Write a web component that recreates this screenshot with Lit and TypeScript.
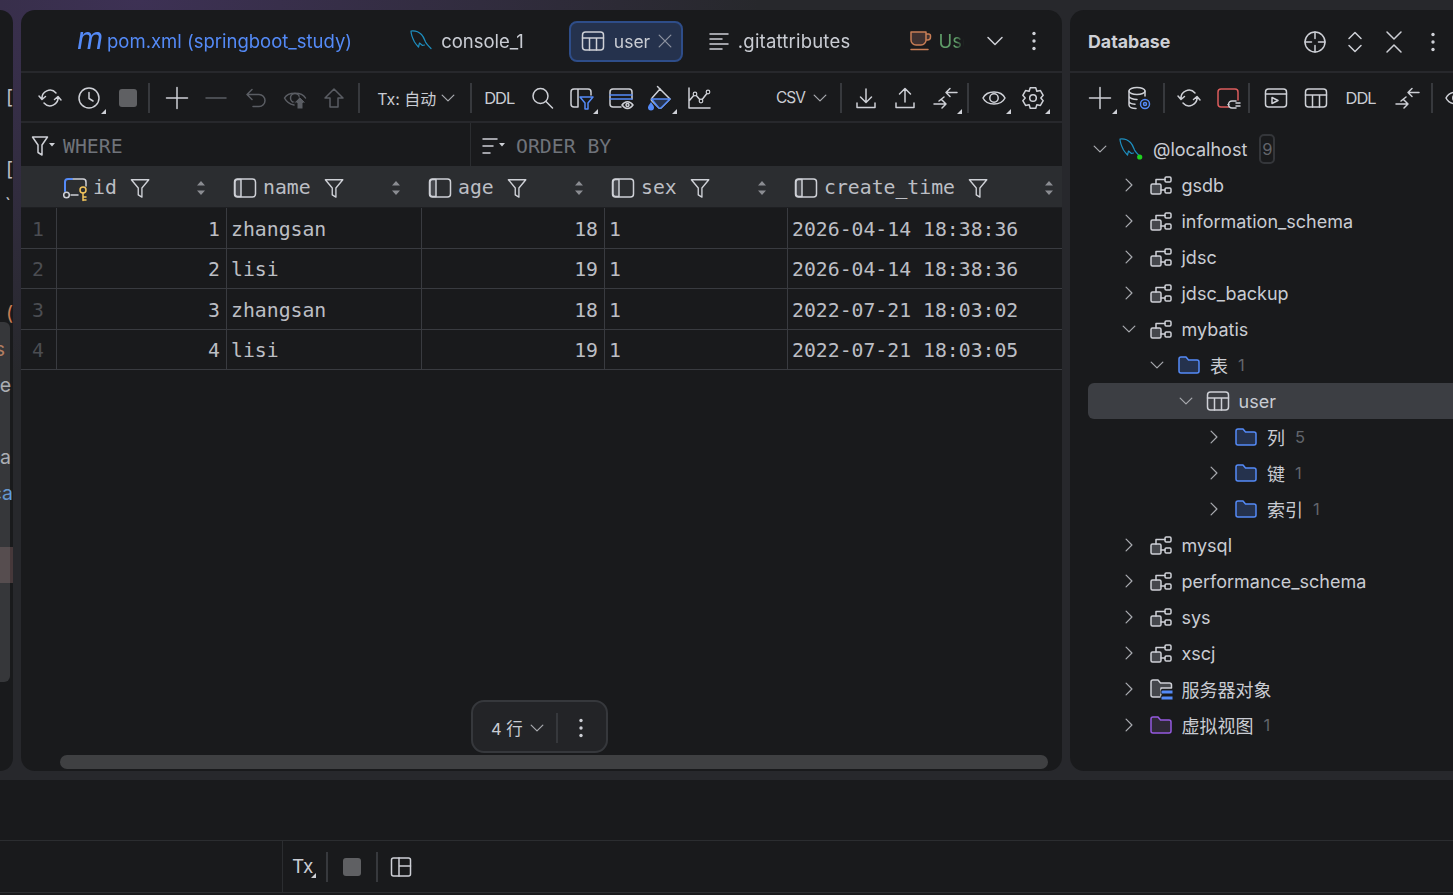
import { LitElement, html, css, svg } from 'lit';
import { customElement } from 'lit/decorators.js';

const tri = svg`<path class="tri" d="M29 23v5h-5z"/>`;
const compareArrows = svg`<path d="M24 6.500H13M17 2.500l-4 4 4 4M11 11L6 15M1 18h12M9 14l4 4-4 4"/>`;
const dolphinBody = svg`<path class="sea" d="M0 2c4-.5 8 1 10.500 3.500 2 2 3 5 4 7.500 1 2 3 4 5.500 6.500M0 2c0 4 2 8 3.500 11 1 1.500 2 3 4 5l1-4 3 2.500 2-.5"/>`;

const icons: Record<string, unknown> = {
  refresh: svg`<path d="M4 13A8 8 0 0 1 18 7M1 10l3 3.500L7.500 10.500M20 11A8 8 0 0 1 6 17M16.500 13.500l3.500-3 3 3.500"/>`,
  history: svg`<circle cx="12" cy="12" r="10"/><path d="M12 6.500V12.500L16 15"/>${tri}`,
  stop: svg`<rect class="stopfill" x="3" y="3" width="18" height="18" rx="3"/>`,
  plus: svg`<path d="M12 1.500v21M1.500 12h21"/>`,
  plusdrop: svg`<path d="M12 1.500v21M1.500 12h21"/>${tri}`,
  minus: svg`<path class="off" d="M2 12h20"/>`,
  undo: svg`<path class="off" d="M8 3.500L3 8.500l5 5M3 8.500h12a6 6 0 0 1 0 12H9"/>`,
  eyeup: svg`<path class="off" d="M11 19C6 18 3 15 1.500 12 5 5.500 19 5.500 22.500 12"/><circle class="off" cx="12" cy="12" r="4.500"/><path class="offfill" d="M17 11l6 6h-3v6h-6v-6h-3z"/>`,
  up: svg`<path class="off" d="M12 3l9 9h-5v9H8v-9H3z"/>`,
  chevron: svg`<path d="M5 8.500l7 7 7-7"/>`,
  search: svg`<circle cx="10.500" cy="10" r="7.500"/><path d="M16 15.500l6.500 6.500"/>`,
  filtertable: svg`<path d="M9 21H5a3 3 0 0 1-3-3V6a3 3 0 0 1 3-3h14a3 3 0 0 1 3 3v3M9 3v18"/><path class="blue" d="M11 11h13l-5 6v6h-3v-6z"/>${tri}`,
  cardeye: svg`<path d="M12 21H4a3 3 0 0 1-3-3V6a3 3 0 0 1 3-3h16a3 3 0 0 1 3 3v7"/><path class="blue" d="M1 9h22M1 13h22"/><path d="M13 19c3-4.500 8-4.500 11 0-3 4.500-8 4.500-11 0z"/><circle cx="18.500" cy="19" r="1.500"/>`,
  paint: svg`<path d="M12 3l10 10-8.500 8.500a2 2 0 0 1-3 0L4 15a2 2 0 0 1 0-3z"/><path class="bluefill" d="M3.500 13h18.500l-8.500 8.500a2 2 0 0 1-3 0z"/><path d="M12 3L9.500 .5"/><path class="dropfill" d="M3 16c-2 3-3 4-3 5.500a3 3 0 0 0 6 0c0-1.500-1-2.500-3-5.500z"/>${tri}`,
  chart: svg`<path d="M2 2v20h21M2 15l6-7 6 7 7-9"/><circle class="bg" cx="8" cy="8" r="1.800"/><circle class="bg" cx="14" cy="15" r="1.800"/><circle class="bg" cx="21" cy="6" r="1.800"/>`,
  download: svg`<path d="M12 3v13M6.500 11l5.500 5.500 5.500-5.500M3 17v4.500h18V17"/>`,
  upload: svg`<path d="M12 16V3M6.500 8L12 2.500 17.500 8M3 17v4.500h18V17"/>`,
  compare: svg`${compareArrows}${tri}`,
  compareplain: compareArrows,
  eye: svg`<path d="M1 12c4-8 18-8 22 0-4 8-18 8-22 0z"/><circle cx="12" cy="12" r="4.200"/>${tri}`,
  gear: svg`<path stroke-width="1.250" transform="translate(-2.400 -1.200) scale(1.200)" d="M9.700 2.500h4.600l.9 2.900 3-.6 2.300 4-2 2.200 2 2.200-2.300 4-3-.6-.9 2.900H9.700l-.9-2.900-3 .6-2.300-4 2-2.200-2-2.200 2.300-4 3 .6z"/><circle cx="12" cy="12" r="3.300"/>${tri}`,
  target: svg`<circle cx="12" cy="12" r="10"/><path d="M12 2v6.500M12 15.500V22M2 12h6.500M15.500 12H22"/>`,
  expand: svg`<path d="M6 8.500l6-6 6 6M6 15.500l6 6 6-6"/>`,
  collapse: svg`<path d="M5 2l7 7 7-7M5 22l7-7 7 7"/>`,
  dots: svg`<circle class="dot" cx="12" cy="4.500" r="1.700"/><circle class="dot" cx="12" cy="12" r="1.700"/><circle class="dot" cx="12" cy="19.500" r="1.700"/>`,
  dbgear: svg`<ellipse cx="10" cy="5" rx="8" ry="3.500"/><path d="M2 5v14c0 2 3 3.500 7 3.500M18 5v5M2 10c0 2 4 3.500 8 3.500M2 15c0 2 3 3 6 3.300"/><circle class="bluestroke" cx="18" cy="18" r="4.500"/><circle class="bluestroke" cx="18" cy="18" r="1.500"/>`,
  redplug: svg`<path class="red" d="M13 21H5a3 3 0 0 1-3-3V6a3 3 0 0 1 3-3h14a3 3 0 0 1 3 3v8"/><path d="M20 15h-4a3.500 3.500 0 0 0 0 7h4M20 17h4M20 20h4M12 18.500h1"/>`,
  console: svg`<rect x="1.500" y="3" width="21" height="18" rx="3"/><path d="M1.500 8h21M8 11.500l6 3-6 3z"/>`,
  table: svg`<rect x="1.500" y="3" width="21" height="18" rx="3"/><path d="M1.500 9h21M8.500 9v12M15.500 9v12"/>`,
  dolphin: dolphinBody,
  dolphinlive: svg`${dolphinBody}<circle class="live" cx="19.700" cy="20" r="2.600"/>`,
  schema: svg`<rect class="schemafill" x="2" y="11" width="10" height="10" rx="1.500"/><rect x="16" y="4" width="6" height="5" rx="1.200"/><rect x="16" y="15" width="6" height="5" rx="1.200"/><path d="M12 17h4M7 11V6.500h9"/>`,
  folder: svg`<path class="bluefolder" d="M2 6a2 2 0 0 1 2-2h5l2.500 3h8.500a2 2 0 0 1 2 2v9a2 2 0 0 1-2 2H4a2 2 0 0 1-2-2z"/>`,
  purplefolder: svg`<path class="purplefolder" d="M2 6a2 2 0 0 1 2-2h5l2.500 3h8.500a2 2 0 0 1 2 2v9a2 2 0 0 1-2 2H4a2 2 0 0 1-2-2z"/>`,
  serverfolder: svg`<path class="schemafill" d="M2 5a2 2 0 0 1 2-2h5l2.500 3h9a2 2 0 0 1 2 2v3H12v9H4a2 2 0 0 1-2-2z"/><rect class="serverbar" x="12" y="13" width="12" height="4" rx=".8"/><rect class="serverbar" x="12" y="19" width="12" height="4" rx=".8"/>`,
  column: svg`<rect x="1.500" y="3" width="21" height="18" rx="3"/><path class="schemafill" d="M4.500 3.500h3.500v17H4.500a2.500 2.500 0 0 1-2.500-2.500V6a2.500 2.500 0 0 1 2.500-2.500z"/>`,
  pk: svg`<path d="M9 3h11a3 3 0 0 1 3 3v4M8 19h7"/><path class="bluebold" d="M9 3H5a3 3 0 0 0-3 3v9"/><circle cx="3.500" cy="19" r="2.800"/><circle class="key" cx="20" cy="14" r="3"/><path class="key" d="M20 17v7.500M20 21h3M20 24h3"/>`,
  lines: svg`<path d="M2 5h18M2 10h12M2 15h18M2 20h12"/>`,
  cup: svg`<path class="cup" d="M2 3h15v8a5 5 0 0 1-5 5H7a5 5 0 0 1-5-5zM17 5h2.500a2 2 0 0 1 2 2v1a3 3 0 0 1-3 3H17M2 20.500h17"/>`,
  funnel: svg`<path d="M1.500 3h19l-7.500 9v10l-4-2.500V12z"/>`,
  wherefunnel: svg`<path d="M1.500 3h15l-5.500 8v10l-4-2.500V11z"/><path class="caret" d="M18 9h6l-3 3.500z"/>`,
  orderlines: svg`<path d="M1 5h14M1 12h10M1 19h7"/><path class="caret" d="M17 9h6l-3 3.500z"/>`,
  sort: svg`<path class="sortfill" d="M12 5l4 4.500H8zM12 19l4-4.500H8z"/>`,
  close: svg`<path d="M5 5l14 14M19 5L5 19"/>`,
  layout: svg`<rect x="2.500" y="3" width="19" height="18" rx="2"/><path d="M10 3v18M10 11h11.500"/>`,
  txtri: tri,
};

function icon(name: string, cls = '') {
  return html`<svg class="ic ${cls}" viewBox="0 0 24 24">${icons[name]}</svg>`;
}

const iconCss = css`
  .ic {
    width: 24px;
    height: 24px;
    flex: none;
    overflow: visible;
    fill: none;
    stroke: #ced0d6;
    stroke-width: 1.5;
    stroke-linejoin: round;
    stroke-linecap: round;
  }
  .ic .tri { fill: #ced0d6; stroke: none; }
  .ic .off { stroke: #5a5d63; }
  .ic .offfill { fill: #5a5d63; stroke: #191a1c; stroke-width: 1; }
  .ic .stopfill { fill: #5f6063; stroke: none; }
  .ic .blue { stroke: #548af7; }
  .ic .bluefill { fill: #25324d; stroke: #548af7; }
  .ic .dropfill { fill: #548af7; stroke: none; }
  .ic .bluestroke { stroke: #548af7; fill: #191a1c; }
  .ic .bluebold { stroke: #548af7; stroke-width: 2; }
  .ic .bg { fill: #191a1c; stroke-width: 1.2; }
  .ic .red { stroke: #db5c5c; }
  .ic .sea { stroke: #1e8fc0; stroke-width: 1.2; }
  .ic .live { fill: #1fd11f; stroke: none; }
  .ic .schemafill { fill: #45474c; }
  .ic .bluefolder { stroke: #548af7; fill: #25324d; }
  .ic .purplefolder { stroke: #955ae0; fill: #2f2936; }
  .ic .serverbar { fill: #548af7; stroke: #191a1c; stroke-width: 1; }
  .ic .key { stroke: #f2c55c; }
  .ic .cup { stroke: #c77d55; fill: #3f3130; }
  .ic .caret { fill: #ced0d6; stroke: none; }
  .ic .sortfill { fill: #8a8c91; stroke: none; }
  .ic .dot { fill: #ced0d6; stroke: none; }
`;

interface TreeRow {
  level: number;
  open?: boolean;
  icon: string;
  label: string;
  count?: string;
  selected?: boolean;
}

const tree: TreeRow[] = [
  { level: 1, icon: 'schema', label: 'gsdb' },
  { level: 1, icon: 'schema', label: 'information_schema' },
  { level: 1, icon: 'schema', label: 'jdsc' },
  { level: 1, icon: 'schema', label: 'jdsc_backup' },
  { level: 1, open: true, icon: 'schema', label: 'mybatis' },
  { level: 2, open: true, icon: 'folder', label: '表', count: '1' },
  { level: 3, open: true, icon: 'table', label: 'user', selected: true },
  { level: 4, icon: 'folder', label: '列', count: '5' },
  { level: 4, icon: 'folder', label: '键', count: '1' },
  { level: 4, icon: 'folder', label: '索引', count: '1' },
  { level: 1, icon: 'schema', label: 'mysql' },
  { level: 1, icon: 'schema', label: 'performance_schema' },
  { level: 1, icon: 'schema', label: 'sys' },
  { level: 1, icon: 'schema', label: 'xscj' },
  { level: 1, icon: 'serverfolder', label: '服务器对象' },
  { level: 1, icon: 'purplefolder', label: '虚拟视图', count: '1' },
];

const rows = [
  ['1', 'zhangsan', '18', '1', '2026-04-14 18:38:36'],
  ['2', 'lisi', '19', '1', '2026-04-14 18:38:36'],
  ['3', 'zhangsan', '18', '1', '2022-07-21 18:03:02'],
  ['4', 'lisi', '19', '1', '2022-07-21 18:03:05'],
];

const columns = [
  { name: 'id', icon: 'pk' },
  { name: 'name', icon: 'column' },
  { name: 'age', icon: 'column' },
  { name: 'sex', icon: 'column' },
  { name: 'create_time', icon: 'column' },
];

const leftRows: Array<{ t: string; c?: string; pr?: number; hl?: boolean }> = [
  { t: '[' }, { t: '' }, { t: '[' }, { t: '`', pr: 2 }, { t: '' }, { t: '' },
  { t: '(', c: '#c77d55', pr: 0 }, { t: 's', c: '#c77d55', pr: 8 }, { t: 'e', pr: 2 },
  { t: '' }, { t: 'a', pr: 2 }, { t: 'ca', c: '#5c9ee8', pr: 0 }, { t: '' }, { t: '', hl: true },
];

@customElement('app-root')
export class AppRoot extends LitElement {
  static styles = [
    iconCss,
    css`
      :host {
        display: block;
        font-family: Inter, 'Noto Sans CJK SC', sans-serif;
        color: #c9ccd3;
      }

      .app {
        height: 895px;
        overflow: hidden;
        display: flex;
        flex-direction: column;
        background: radial-gradient(ellipse 620px 380px at 140px 0, #3d3154 0%, rgba(61, 49, 84, 0) 100%), #27282c;
      }

      .panels {
        display: grid;
        grid-template-columns: 13px 1041px 383px;
        column-gap: 8px;
        height: 761px;
        margin-top: 10px;
      }

      .panel {
        background: #191a1c;
        position: relative;
        overflow: hidden;
      }

      .left {
        border-radius: 0 14px 14px 0;
        padding-top: 69px;
      }

      .left-row {
        height: 36px;
        display: flex;
        justify-content: flex-end;
        align-items: center;
        font-size: 19.5px;
        white-space: nowrap;
      }

      .left-row.hl {
        background: #46383a;
      }

      .thumb {
        position: absolute;
        left: 0;
        top: 312px;
        width: 10px;
        height: 360px;
        background: rgba(130, 132, 138, 0.28);
        border-radius: 0 6px 6px 0;
      }

      .main {
        border-radius: 14px;
      }

      .right {
        border-radius: 14px 0 0 14px;
      }

      .tabs {
        height: 60px;
        padding-top: 1px;
        border-bottom: 2px solid #27282c;
        display: flex;
        align-items: center;
      }

      .tab-list {
        flex: 1;
        min-width: 0;
        margin-right: 11px;
        padding-left: 44px;
        display: flex;
        align-items: center;
        overflow: hidden;
        -webkit-mask-image: linear-gradient(to left, transparent, #000 8px);
        mask-image: linear-gradient(to left, transparent, #000 8px);
      }

      .tab {
        flex: none;
        display: flex;
        align-items: center;
        height: 41px;
        padding: 0 46px 0 12px;
        gap: 6px;
        font-size: 18.5px;
        white-space: nowrap;
      }

      .tab.blue {
        color: #548af7;
        gap: 9px;
        padding-right: 47px;
      }

      .tab.console {
        padding-right: 45px;
      }

      .tab.git {
        letter-spacing: 0.2px;
        padding-right: 47px;
      }

      .tab.green {
        color: #5f9c68;
        padding-right: 0;
        gap: 5px;
      }

      .tab.active {
        padding: 0 10px;
        gap: 9px;
        font-size: 17.5px;
        background: #25324d;
        border: 2px solid #2e4d89;
        border-radius: 8px;
        margin-right: 13px;
        box-sizing: border-box;
        width: 114px;
      }

      .tab.active .ic.x {
        width: 20px;
        height: 20px;
        margin-left: -4px;
        stroke: #8d93a0;
      }

      .maven {
        font-style: italic;
        font-size: 30px;
        line-height: 24px;
        width: 21px;
        margin-top: -6px;
      }

      .slot {
        width: 39.33px;
        height: 39px;
        flex: none;
        display: flex;
        align-items: center;
        justify-content: center;
      }

      .toolbar {
        height: 47px;
        padding: 1px 0 0 9px;
        border-bottom: 2px solid #27282c;
        display: flex;
        align-items: center;
      }

      .sep {
        width: 2px;
        height: 30px;
        background: #37393d;
        flex: none;
      }

      .sep.a { margin: 0 7.5px 0 0; }
      .sep.b { margin: 0 0 0 4px; }
      .sep.c { margin: 0; }
      .sep.d { margin: 0 5px 0 3px; }

      .drop {
        display: flex;
        align-items: center;
        font-size: 16px;
        white-space: nowrap;
      }

      .drop .ic {
        width: 20px;
        height: 20px;
        stroke: #a6a8ad;
        margin-left: 2px;
      }

      .tx {
        padding-left: 17px;
        width: 110px;
        box-sizing: border-box;
      }

      .ddl {
        font-size: 16.5px;
        letter-spacing: -1px;
        margin: 0 8px 0 12px;
        white-space: nowrap;
      }

      .csv {
        margin-left: 57px;
        width: 64.5px;
        font-size: 15.5px;
        letter-spacing: -1px;
      }

      .csv .ic {
        margin-left: 5px;
      }

      .filters {
        height: 40px;
        padding-top: 3px;
        display: flex;
        font-family: 'DejaVu Sans Mono', monospace;
        font-size: 19.8px;
        color: #6f737a;
      }

      .filter {
        display: flex;
        align-items: center;
      }

      .filter.where {
        width: 439px;
        padding-left: 10px;
        gap: 8px;
        margin-top: -3px;
        padding-top: 3px;
        border-right: 1px solid #2b2d30;
      }

      .filter.order {
        padding-left: 11px;
        gap: 10px;
      }

      .grid {
        display: grid;
        grid-template-columns: 36px 170px 195px 183px 183px 1fr;
        font-family: 'DejaVu Sans Mono', monospace;
        font-size: 19.8px;
      }

      .head {
        height: 39px;
        padding: 2px 22px 0 6px;
        background: #2b2d30;
        display: flex;
        align-items: center;
        color: #bcbec4;
        border-bottom: 1px solid #1e1f22;
      }

      .head.corner {
        padding: 2px 0 0;
      }

      .head.last {
        padding-right: 9px;
      }

      .head .name {
        margin: 0 13px 0 6px;
      }

      .head .fn {
        width: 22px;
        height: 22px;
      }

      .head .sort {
        margin-left: auto;
        margin-right: -8px;
      }

      .cell {
        height: 40.5px;
        box-sizing: border-box;
        border-bottom: 1px solid #393b40;
        border-right: 1px solid #393b40;
        display: flex;
        align-items: center;
        padding: 3px 6px 0 4px;
        white-space: nowrap;
        color: #bcbec4;
      }

      .cell.num {
        justify-content: flex-end;
      }

      .cell.idx {
        color: #4b4d52;
        padding-left: 11px;
      }

      .cell.end {
        border-right: none;
      }

      .pill {
        position: absolute;
        left: 450px;
        top: 690px;
        width: 137px;
        height: 53px;
        box-sizing: border-box;
        background: #232427;
        border: 2px solid #36383c;
        border-radius: 13px;
        display: flex;
        align-items: center;
        font-size: 16.5px;
        padding: 2px 0 0 18px;
        z-index: 2;
      }

      .pill .ic.chev {
        width: 20px;
        height: 20px;
        margin: 0 9px 0 4px;
        stroke: #a6a8ad;
      }

      .pill .line {
        width: 2px;
        height: 30px;
        background: #36383c;
      }

      .pill .ic.more {
        margin-left: 11px;
      }

      .hbar {
        position: absolute;
        left: 39px;
        width: 988px;
        height: 14px;
        bottom: 2px;
        border-radius: 7px;
        background: #3f4042;
      }

      .rhead {
        height: 59px;
        padding: 2px 0 0 18px;
        display: flex;
        align-items: center;
        border-bottom: 2px solid #27282c;
      }

      .rhead .title {
        font-weight: 700;
        font-size: 17.8px;
        flex: 1;
        color: #ced0d6;
      }

      .rtools {
        height: 50px;
        display: flex;
        align-items: center;
        padding-left: 10.5px;
        overflow: hidden;
      }

      .rtools .sep.e { margin: 0 4px; }
      .rtools .sep.f { margin: 0 7px 0 0; }
      .rtools .ddl { margin: 0 12px 0 10px; }

      .tree {
        margin-top: 8px;
        display: flex;
        flex-direction: column;
        padding-left: 18px;
      }

      .row {
        height: 36px;
        display: flex;
        align-items: center;
        font-size: 18px;
        white-space: nowrap;
        box-sizing: border-box;
      }

      .row.sel {
        background: #3c3e43;
        border-radius: 6px 0 0 6px;
      }

      .row .ic.ch {
        width: 20px;
        height: 20px;
        stroke: #a6a8ad;
        margin-right: 10px;
      }

      .row .ic.ch.closed {
        transform: rotate(-90deg);
      }

      .row .label {
        margin-left: 9px;
      }

      .row .count {
        margin-left: 10px;
        font-size: 16.5px;
        color: #62656b;
      }

      .badge {
        margin-left: 12px;
        width: 16px;
        height: 30px;
        box-sizing: border-box;
        border: 2px solid #34363a;
        border-radius: 5px;
        color: #62656b;
        font-size: 16.5px;
        display: flex;
        align-items: center;
        justify-content: center;
      }

      .bottom {
        margin-top: 9px;
        flex: 1;
        background: #191a1c;
        display: flex;
        flex-direction: column;
      }

      .spacer {
        height: 60px;
        border-bottom: 1px solid #2b2d30;
        flex: none;
      }

      .bar {
        height: 51px;
        display: flex;
        align-items: center;
        border-bottom: 1px solid #2b2d30;
      }

      .bar-left {
        width: 282px;
        height: 100%;
        border-right: 1px solid #2b2d30;
        flex: none;
      }

      .tx-label {
        margin-left: 9px;
        font-size: 19px;
        width: 24px;
      }

      .bar .small-tri {
        margin: -10px 0 0 -24px;
        transform: translateX(-5px);
      }

      .bar .sep {
        margin: 0 12px 0 10px;
      }

      .bar .stopic {
        margin-right: -3px;
      }

      .bar .sep.s2 {
        margin: 0 11px 0 15px;
      }
    `,
  ];

  private renderTree() {
    return tree.map(
      (r) => html`
        <div
          class="row ${r.selected ? 'sel' : ''}"
          style="padding-left: ${2 + r.level * 28.5}px"
        >
          ${icon('chevron', `ch ${r.open ? '' : 'closed'}`)} ${icon(r.icon)}
          <span class="label">${r.label}</span>
          ${r.count ? html`<span class="count">${r.count}</span>` : ''}
        </div>
      `
    );
  }

  render() {
    return html`
      <div class="app">
        <div class="panels">
          <div class="panel left">
            ${leftRows.map(
              (r) => html`<div
                class="left-row ${r.hl ? 'hl' : ''}"
                style="color: ${r.c ?? '#bcbec4'}; padding-right: ${r.pr ?? 0}px"
              >
                ${r.t}
              </div>`
            )}
            <div class="thumb"></div>
          </div>

          <div class="panel main">
            <div class="tabs">
              <div class="tab-list">
                <div class="tab blue"><span class="maven">m</span>pom.xml (springboot_study)</div>
                <div class="tab console">${icon('dolphin')}console_1</div>
                <div class="tab active">${icon('table')}user${icon('close', 'x')}</div>
                <div class="tab git">${icon('lines')}.gitattributes</div>
                <div class="tab green">${icon('cup')}User</div>
              </div>
              <div class="slot">${icon('chevron')}</div>
              <div class="slot">${icon('dots')}</div>
              <div style="width: 8px"></div>
            </div>

            <div class="toolbar">
              <div class="slot">${icon('refresh')}</div>
              <div class="slot">${icon('history')}</div>
              <div class="slot">${icon('stop')}</div>
              <div class="sep a"></div>
              <div class="slot">${icon('plus')}</div>
              <div class="slot">${icon('minus')}</div>
              <div class="slot">${icon('undo')}</div>
              <div class="slot">${icon('eyeup')}</div>
              <div class="slot">${icon('up')}</div>
              <div class="sep b"></div>
              <div class="drop tx">Tx: 自动${icon('chevron')}</div>
              <div class="sep c"></div>
              <div class="ddl">DDL</div>
              <div class="slot">${icon('search')}</div>
              <div class="slot">${icon('filtertable')}</div>
              <div class="slot">${icon('cardeye')}</div>
              <div class="slot">${icon('paint')}</div>
              <div class="slot">${icon('chart')}</div>
              <div class="drop csv">CSV${icon('chevron')}</div>
              <div class="sep c"></div>
              <div class="slot" style="margin-left: 4px">${icon('download')}</div>
              <div class="slot">${icon('upload')}</div>
              <div class="slot">${icon('compare')}</div>
              <div class="sep d"></div>
              <div class="slot">${icon('eye')}</div>
              <div class="slot">${icon('gear')}</div>
            </div>

            <div class="filters">
              <div class="filter where">${icon('wherefunnel')}WHERE</div>
              <div class="filter order">${icon('orderlines')}ORDER BY</div>
            </div>

            <div class="grid">
              <div class="head corner"></div>
              ${columns.map(
                (c, i) => html`
                  <div class="head ${i === columns.length - 1 ? 'last' : ''}">
                    ${icon(c.icon)}
                    <span class="name">${c.name}</span>
                    ${icon('funnel', 'fn')} ${icon('sort', 'sort')}
                  </div>
                `
              )}
              ${rows.map(
                (r, i) => html`
                  <div class="cell idx">${i + 1}</div>
                  <div class="cell num">${r[0]}</div>
                  <div class="cell">${r[1]}</div>
                  <div class="cell num">${r[2]}</div>
                  <div class="cell">${r[3]}</div>
                  <div class="cell end">${r[4]}</div>
                `
              )}
            </div>

            <div class="pill">
              4 行 ${icon('chevron', 'chev')}
              <div class="line"></div>
              ${icon('dots', 'more')}
            </div>
            <div class="hbar"></div>
          </div>

          <div class="panel right">
            <div class="rhead">
              <div class="title">Database</div>
              <div class="slot">${icon('target')}</div>
              <div class="slot">${icon('expand')}</div>
              <div class="slot">${icon('collapse')}</div>
              <div class="slot">${icon('dots')}</div>
            </div>

            <div class="rtools">
              <div class="slot">${icon('plusdrop')}</div>
              <div class="slot">${icon('dbgear')}</div>
              <div class="sep e"></div>
              <div class="slot">${icon('refresh')}</div>
              <div class="slot">${icon('redplug')}</div>
              <div class="sep f"></div>
              <div class="slot">${icon('console')}</div>
              <div class="slot">${icon('table')}</div>
              <div class="ddl">DDL</div>
              <div class="slot">${icon('compareplain')}</div>
              <div class="sep e"></div>
              <div class="slot">${icon('eye')}</div>
            </div>

            <div class="tree">
              <div class="row" style="padding-left: 2px">
                ${icon('chevron', 'ch')} ${icon('dolphinlive')}
                <span class="label">@localhost</span>
                <span class="badge">9</span>
              </div>
              ${this.renderTree()}
            </div>
          </div>
        </div>

        <div class="bottom">
          <div class="spacer"></div>
          <div class="bar">
            <div class="bar-left"></div>
            <div class="tx-label">Tx</div>
            ${icon('txtri', 'small-tri')}
            <div class="sep"></div>
            ${icon('stop', 'stopic')}
            <div class="sep s2"></div>
            ${icon('layout')}
          </div>
        </div>
      </div>
    `;
  }
}

declare global {
  interface HTMLElementTagNameMap {
    'app-root': AppRoot;
  }
}
